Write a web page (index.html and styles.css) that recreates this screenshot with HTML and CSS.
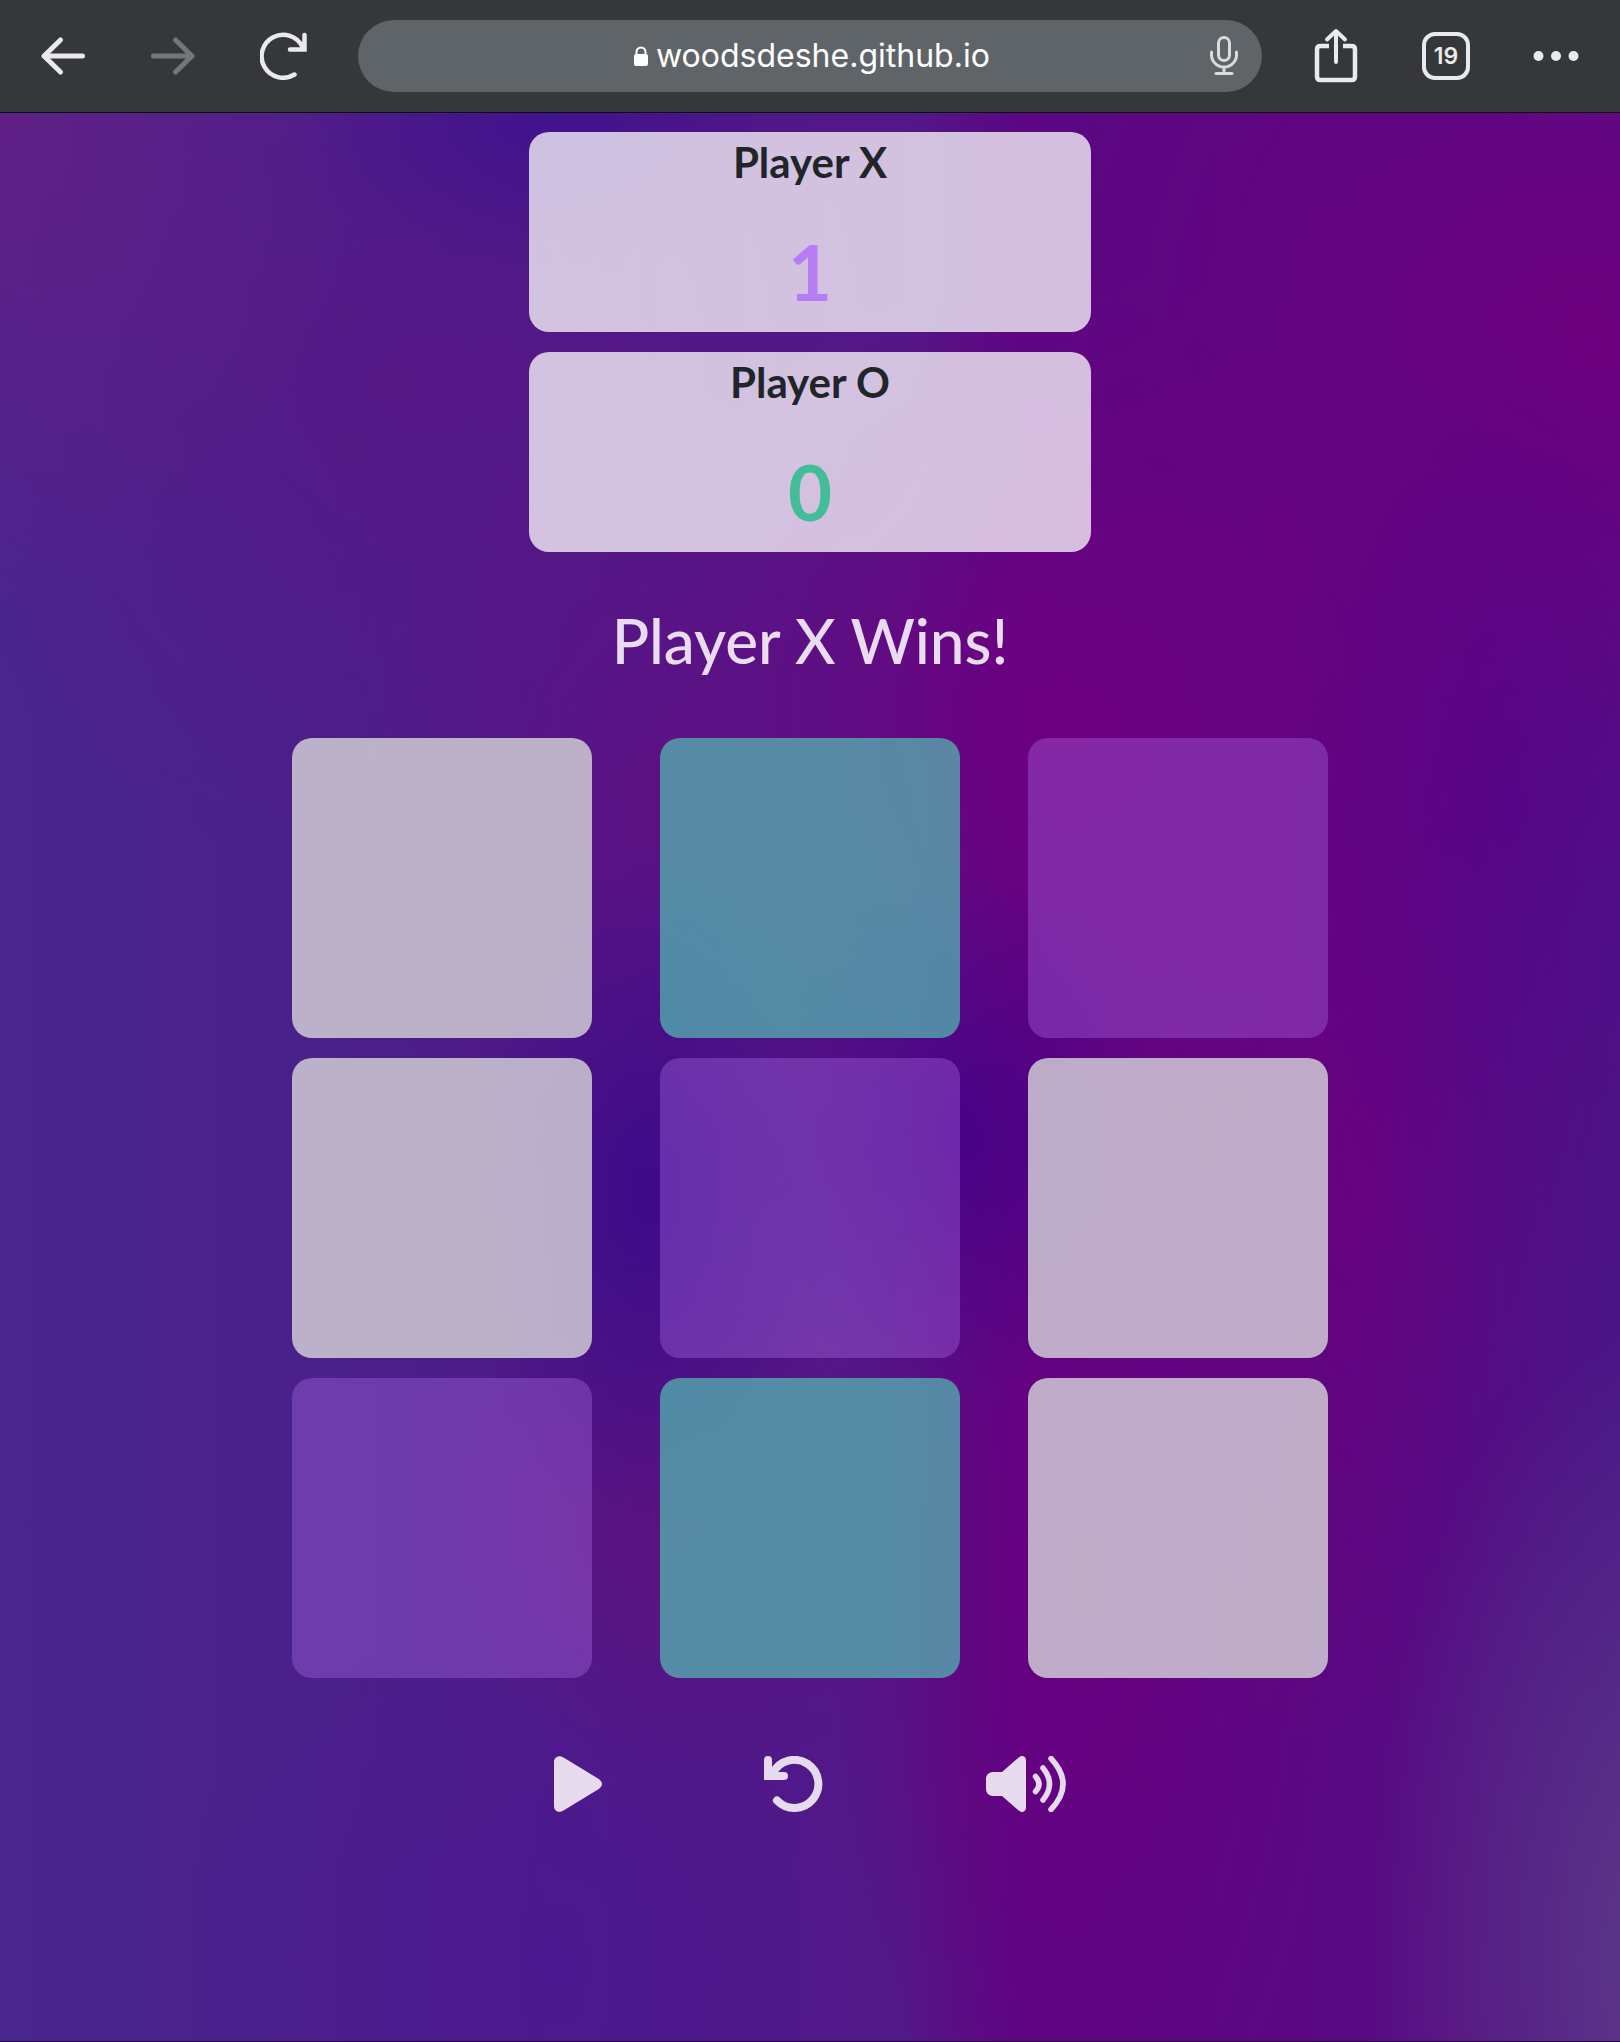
FILE: index.html
```html
<!DOCTYPE html>
<html lang="en">
<head>
<meta charset="utf-8">
<meta name="viewport" content="width=device-width, initial-scale=1">
<title>Tic Tac Toe</title>
<link rel="stylesheet" href="styles.css">
</head>
<body>
<header class="toolbar">
  <nav class="nav" aria-label="History">
    <button class="tool" type="button" aria-label="Back">
      <svg width="48" height="48" viewBox="0 0 48 48" fill="none" stroke="currentColor" stroke-width="5" stroke-linecap="round" stroke-linejoin="round"><path d="M42.500 24H4M20.500 8L4 24l16.500 16"/></svg>
    </button>
    <button class="tool" type="button" aria-label="Forward" disabled>
      <svg width="48" height="48" viewBox="0 0 48 48" fill="none" stroke="currentColor" stroke-width="5" stroke-linecap="round" stroke-linejoin="round"><path d="M3.500 24H42M25.500 8L42 24 25.500 40"/></svg>
    </button>
    <button class="tool" type="button" aria-label="Reload">
      <svg width="48" height="48" viewBox="0 0 48 48" fill="none" stroke="currentColor" stroke-width="4.500" stroke-linecap="round" stroke-linejoin="miter"><path d="M34.500 42.500A21.500 21.500 0 1 1 42.500 15"/><path d="M44.500 3v14.500H30"/></svg>
    </button>
  </nav>
  <form class="address">
    <label class="lock" for="url" aria-label="Address">
      <svg width="14" height="20" viewBox="0 0 14 20"><rect y="8" width="14" height="12" rx="2" fill="currentColor"/><path d="M2.500 9V6a4.500 4.500 0 0 1 9 0v3" fill="none" stroke="currentColor" stroke-width="2"/></svg>
    </label>
    <input class="url" id="url" type="text" value="woodsdeshe.github.io">
    <button class="mic" type="button" aria-label="Voice search">
      <svg width="28" height="40" viewBox="0 0 28 40" fill="none" stroke="currentColor" stroke-width="3" stroke-linecap="round"><rect x="8.500" y="1.500" width="11" height="23" rx="5.500"/><path d="M1.500 16v3a12.500 12 0 0 0 25 0v-3M14 31v6M6 37.500h16"/></svg>
    </button>
  </form>
  <nav class="nav" aria-label="Page">
    <button class="tool" type="button" aria-label="Share">
      <svg width="44" height="56" viewBox="0 0 44 56" fill="none" stroke="currentColor" stroke-width="4" stroke-linecap="round" stroke-linejoin="round"><path d="M15 18H6.500Q3 18 3 21.500v27Q3 52 6.500 52h31q3.500 0 3.500-3.500v-27Q41 18 37.500 18H29" stroke-width="4.500" stroke-linecap="butt"/><path d="M22 34V3M13 11.500L22 3l9 8.500"/></svg>
    </button>
    <button class="tool" type="button" aria-label="Open tabs"><span class="tabs">19</span></button>
    <button class="tool" type="button" aria-label="Menu">
      <svg width="48" height="12" viewBox="0 0 48 12" fill="currentColor"><circle cx="6.500" cy="6" r="5"/><circle cx="24" cy="6" r="5"/><circle cx="41.500" cy="6" r="5"/></svg>
    </button>
  </nav>
</header>
<main class="game">
  <section class="scores">
    <div class="card">
      <h2 class="player">Player X</h2>
      <p class="score score-x">1</p>
    </div>
    <div class="card">
      <h2 class="player">Player O</h2>
      <p class="score score-o">0</p>
    </div>
  </section>
  <h1 class="message">Player X Wins!</h1>
  <section class="board">
    <button class="cell" type="button" aria-label="Empty"></button>
    <button class="cell cell-o" type="button" aria-label="O"></button>
    <button class="cell cell-x" type="button" aria-label="X"></button>
    <button class="cell" type="button" aria-label="Empty"></button>
    <button class="cell cell-x" type="button" aria-label="X"></button>
    <button class="cell" type="button" aria-label="Empty"></button>
    <button class="cell cell-x" type="button" aria-label="X"></button>
    <button class="cell cell-o" type="button" aria-label="O"></button>
    <button class="cell" type="button" aria-label="Empty"></button>
  </section>
  <div class="controls">
    <button class="control" type="button" aria-label="Play">
      <svg width="48" height="56" viewBox="0 0 48 56" fill="currentColor"><path d="M0 6C0 1 5 -1.500 9.500 1.500L44 22.500C49.300 26 49.300 30 44 33.500L9.500 54.500C5 57.500 0 55 0 50Z"/></svg>
    </button>
    <button class="control" type="button" aria-label="Restart">
      <svg width="60" height="56" viewBox="0 0 60 56" fill="none" stroke="currentColor" stroke-width="8" stroke-linecap="round"><path d="M13 44.500A24 24 0 1 0 9 17"/><path d="M4 4v16h16"/></svg>
    </button>
    <button class="control" type="button" aria-label="Sound">
      <svg width="80" height="56" viewBox="0 0 80 56"><path d="M7 16h9L33 1.200C36-1.300 40 .5 40 4v48c0 3.500-4 5.300-7 2.800L16 40H7c-4 0-7-3-7-7V23c0-4 3-7 7-7Z" fill="currentColor"/><path d="M49.500 20.500q7 7.500 0 15M57 12q13 16 0 32M65 2.500q24 25.500 0 51" fill="none" stroke="currentColor" stroke-width="5.500" stroke-linecap="round"/></svg>
    </button>
  </div>
</main>
</body>
</html>
```
FILE: styles.css
```css
* {
  box-sizing: border-box;
}

body {
  display: flex;
  flex-direction: column;
  min-height: 100vh;
  margin: 0;
  font-family: Lato, "Open Sans", sans-serif;
}

button {
  margin: 0;
  padding: 0;
  border: 0;
  background: none;
  color: inherit;
  font: inherit;
}

svg {
  display: block;
}

/* Browser bar */
.toolbar {
  display: flex;
  align-items: center;
  gap: 26px;
  height: 113px;
  padding: 0 16px;
  border-bottom: 1px solid #0c0210;
  background: #363739;
  color: #e9eaed;
  font-family: Inter, sans-serif;
}

.nav {
  display: flex;
  flex: none;
  gap: 14px;
}

.tool {
  display: flex;
  align-items: center;
  justify-content: center;
  width: 96px;
  height: 80px;
}

.tool:disabled {
  color: #757678;
}

.address {
  display: flex;
  flex: 1;
  align-items: center;
  justify-content: center;
  gap: 8px;
  position: relative;
  height: 72px;
  padding-left: 8px;
  border-radius: 36px;
  background: #5f6468;
  color: #fff;
}

.url {
  width: 338px;
  padding: 0;
  border: 0;
  outline: 0;
  background: none;
  color: inherit;
  font: 32px/40px Inter, sans-serif;
}

.mic {
  position: absolute;
  right: 24px;
  color: #d9dbde;
}

.tabs {
  width: 48px;
  height: 48px;
  border: 4px solid;
  border-radius: 13px;
  font-size: 23px;
  font-weight: 600;
  line-height: 41px;
}

/* Game */
.game {
  display: flex;
  flex: 1;
  flex-direction: column;
  align-items: center;
  padding: 19px 24px;
  border-bottom: 1px solid #1d0838;
  background:
    radial-gradient(20% 34% at 104% 96%, #5c3c88 0%, #5c3c8800 100%),
    radial-gradient(18% 44% at 102% 66%, #431888aa 0%, #43188800 100%),
    radial-gradient(22% 26% at 0% 0%, #651f85cc 0%, #651f8500 100%),
    radial-gradient(16% 9% at 34% 0%, #380f90aa 0%, #380f9000 100%),
    radial-gradient(30% 26% at 24% 14%, #5a1685aa 0%, #5a168500 100%),
    radial-gradient(12% 18% at 40% 56%, #3a0888dd 0%, #3a088800 100%),
    radial-gradient(13% 14% at 59% 53%, #450086dd 0%, #45008600 100%),
    radial-gradient(18% 22% at 40% 36%, #5f1083cc 0%, #5f108300 100%),
    radial-gradient(16% 14% at 42% 73%, #5c1380 0%, #5c138000 100%),
    radial-gradient(24% 20% at 34% 96%, #4a1994aa 0%, #4a199400 100%),
    radial-gradient(14% 26% at 93% 36%, #550088aa 0%, #55008800 100%),
    radial-gradient(34% 30% at 98% 12%, #6d007e 0%, #6d007e00 100%),
    radial-gradient(28% 24% at 66% 32%, #6d0080 0%, #6d008000 100%),
    radial-gradient(18% 32% at 84% 54%, #6b0080cc 0%, #6b008000 100%),
    radial-gradient(16% 34% at 67% 76%, #680080 0%, #68008000 100%),
    linear-gradient(90deg, #49258e 0%, #4a208a 20%, #501887 40%, #531887 56%, #5c0683 63%, #5a0882 80%, #531085 100%);
}

.scores {
  display: grid;
  gap: 20px;
  width: 100%;
  max-width: 562px;
}

.card {
  height: 200px;
  border-radius: 20px;
  background: rgba(243, 238, 246, 0.8);
  text-align: center;
}

.player {
  margin: 0;
  padding-top: 6px;
  color: #20252a;
  font-size: 42px;
  font-weight: 700;
  line-height: 48px;
}

.score {
  margin: 0;
  padding-top: 38px;
  font-size: 76px;
  font-weight: 700;
  line-height: 96px;
}

.score-x {
  color: #b87df5;
}

.score-o {
  color: #42bd98;
}

.message {
  margin: 48px 0 58px;
  color: #e9dcee;
  font-size: 62px;
  font-weight: 500;
  line-height: 80px;
}

.board {
  display: grid;
  grid-template-columns: repeat(3, 1fr);
  gap: 20px 68px;
  width: 100%;
  max-width: 1036px;
}

.cell {
  aspect-ratio: 1;
  border-radius: 20px;
  background: rgba(215, 215, 218, 0.8);
}

.cell-x {
  background: rgba(178, 114, 238, 0.35);
}

.cell-o {
  background: rgba(85, 205, 183, 0.65);
}

.controls {
  display: flex;
  justify-content: space-between;
  width: 100%;
  max-width: 512px;
  margin-top: 78px;
  color: #e5dbed;
}
```
